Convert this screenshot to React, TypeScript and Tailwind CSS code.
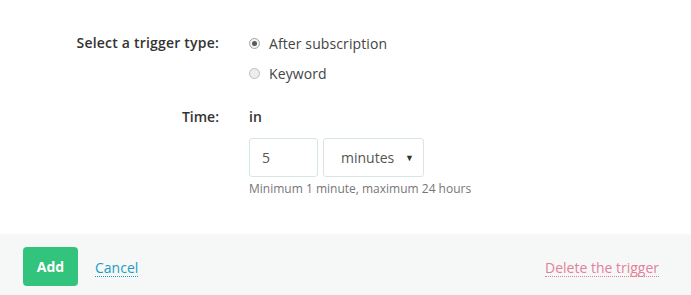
import { useState } from "react";

const Radio = ({ checked, label, onClick }: { checked: boolean; label: string; onClick: () => void }) => (
  <label className="flex items-center gap-[9px] h-[20px] cursor-pointer" onClick={onClick}>
    <span
      className={
        "w-[11px] h-[11px] rounded-full border flex items-center justify-center " +
        (checked ? "border-[#a5a5a5] bg-[#f2f2f2]" : "border-[#bdbdbd] bg-[#ededed]")
      }
    >
      {checked && <span className="w-[5px] h-[5px] rounded-full bg-[#5a5a5a]" />}
    </span>
    <span className="text-[14px] text-[#444] tracking-[0.1px]">{label}</span>
  </label>
);

export default function App() {
  const [type, setType] = useState("after");

  return (
    <div className="w-[691px] h-[295px] overflow-hidden bg-white text-[#333]" style={{ fontFamily: "'Open Sans', 'Noto Sans', sans-serif" }}>
      {/* Form */}
      <div className="h-[234px] pt-[33px]">
        <div className="flex gap-[30px]">
          <div className="w-[219px] text-right text-[14px] font-semibold leading-[20px] tracking-[0.2px]">Select a trigger type:</div>
          <div className="flex flex-col gap-[10px]">
            <Radio checked={type === "after"} label="After subscription" onClick={() => setType("after")} />
            <Radio checked={type === "keyword"} label="Keyword" onClick={() => setType("keyword")} />
          </div>
        </div>

        <div className="flex gap-[30px] mt-[24px]">
          <div className="w-[219px] text-right text-[14px] font-semibold leading-[20px]">Time:</div>
          <div className="flex flex-col">
            <div className="text-[14px] font-semibold leading-[20px]">in</div>
            <div className="flex gap-[5px] mt-[11px]">
              <div className="w-[69px] h-[39px] border border-[#d7e6e3] rounded-[3px] flex items-center px-[12px] text-[14px] text-[#555]">
                5
              </div>
              <div className="w-[101px] h-[39px] border border-[#d7e6e3] rounded-[3px] flex items-center justify-between pl-[17px] pr-[9px] text-[14px] text-[#555]">
                <span>minutes</span>
                <span className="text-[9px] text-[#333]">▼</span>
              </div>
            </div>
            <div className="text-[12px] text-[#777] mt-[4px] leading-[16px]">Minimum 1 minute, maximum 24 hours</div>
          </div>
        </div>
      </div>

      {/* Footer */}
      <div className="bg-[#f6f8f8] flex items-center justify-between pl-[23px] pr-[32px] pt-[13px] pb-[13px]">
        <div className="flex items-center gap-[17px]">
          <button className="w-[55px] h-[39px] rounded-[4px] bg-[#32c37c] text-white text-[14px] font-bold">Add</button>
          <a className="text-[14px] text-[#1b9cbf] border-b border-dotted border-[#1b9cbf] leading-[17px] mt-[3px]">Cancel</a>
        </div>
        <a className="text-[14px] text-[#e2809a] border-b border-dotted border-[#e2809a] leading-[17px] mt-[3px]">Delete the trigger</a>
      </div>
    </div>
  );
}
